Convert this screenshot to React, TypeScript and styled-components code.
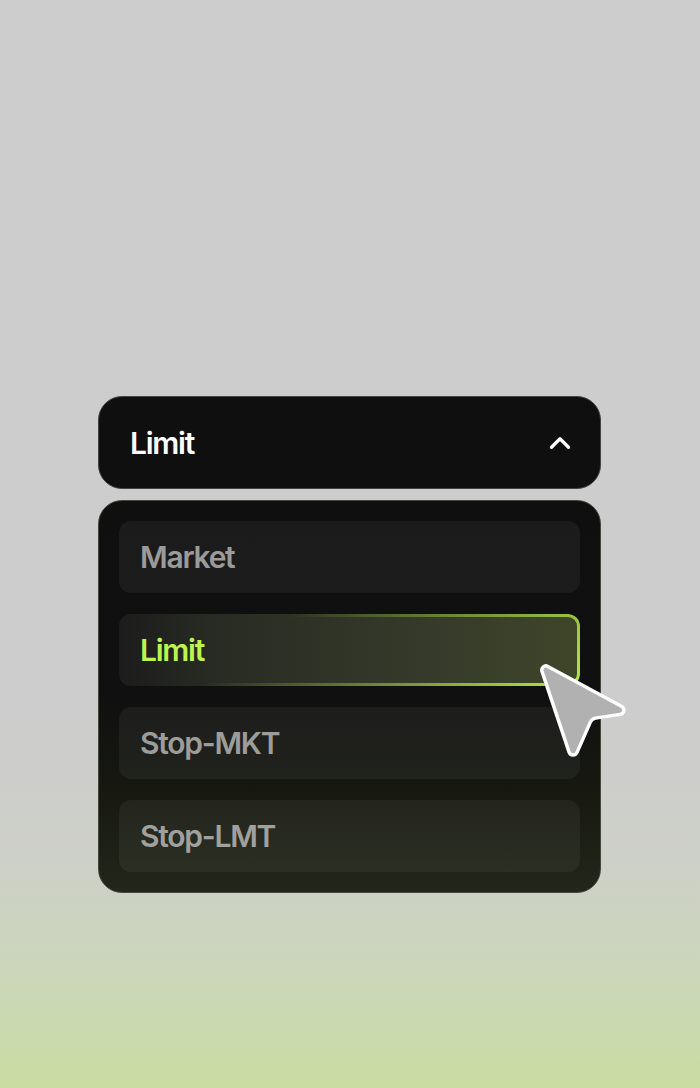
import styled, { createGlobalStyle } from "styled-components";
import { LuChevronUp } from "react-icons/lu";

const GlobalStyle = createGlobalStyle`
  html, body {
    margin: 0;
    padding: 0;
  }
  body {
    font-family: "Inter", "Liberation Sans", sans-serif;
  }
`;

const options = ["Market", "Limit", "Stop-MKT", "Stop-LMT"];
const selected = "Limit";

export default function App() {
  return (
    <>
      <GlobalStyle />
      <Page>
        <Dropdown>
          <Trigger>
            <TriggerLabel>Limit</TriggerLabel>
            <LuChevronUp size={34} strokeWidth={2.3} />
          </Trigger>
          <Panel>
            {options.map((option) => (
              <Option key={option} $active={option === selected}>
                {option}
                {option === selected && (
                  <Cursor viewBox="0 0 90 96" width="91" height="97">
                    <path
                      d="M5 8.5C3.7 4.8 7.3 1.6 10.7 3.4L83.5 42.7C87.3 44.7 86.4 50.2 82.2 50.9L58 54.6C55.6 55 53.9 56.2 52.8 58.4L39.6 88.4C38 92 33 91.9 31.7 88.2Z"
                      fill="#b1b1b1"
                      stroke="#fff"
                      strokeWidth="3.4"
                      strokeLinejoin="round"
                    />
                  </Cursor>
                )}
              </Option>
            ))}
          </Panel>
        </Dropdown>
      </Page>
    </>
  );
}

const Page = styled.div`
  box-sizing: border-box;
  width: 700px;
  height: 1088px;
  padding: 396px 99px 0 98px;
  overflow: hidden;
  background: linear-gradient(180deg, #cdcdcd 0%, #cdcdcd 66%, #cdd0c8 79%, #cbd6b9 90%, #cadca2 100%);
`;

const Dropdown = styled.div`
  display: flex;
  flex-direction: column;
  gap: 11px;
`;

const Trigger = styled.div`
  box-sizing: border-box;
  height: 93px;
  padding: 0 23px 0 31px;
  display: flex;
  align-items: center;
  justify-content: space-between;
  border-radius: 24px;
  border: 1.5px solid #444;
  background: #0f0f0f;
  color: #fff;
`;

const TriggerLabel = styled.span`
  font-size: 30px;
  font-weight: 600;
  letter-spacing: -0.042em;
`;

const Panel = styled.div`
  box-sizing: border-box;
  height: 393px;
  padding: 20px;
  display: flex;
  flex-direction: column;
  gap: 21px;
  border-radius: 24px;
  border: 1.5px solid #44473c;
  background: linear-gradient(180deg, #0f0f0f 0%, #101010 50%, #161810 72%, #23261a 100%);
`;

const Option = styled.div<{ $active?: boolean }>`
  position: relative;
  box-sizing: border-box;
  height: 72px;
  padding: 0 21px;
  display: flex;
  align-items: center;
  border-radius: 12px;
  font-size: 30px;
  font-weight: 600;
  letter-spacing: -0.042em;
  color: ${(p) => (p.$active ? "#bdf54e" : "rgba(255, 255, 255, 0.56)")};
  background: ${(p) =>
    p.$active
      ? "linear-gradient(90deg, #1c1c1c 0%, #282b23 20%, #373b2a 70%, #3e4629 100%)"
      : "rgba(255, 255, 255, 0.05)"};

  ${(p) =>
    p.$active &&
    `
    &::before {
      content: "";
      position: absolute;
      inset: 0;
      padding: 3px;
      border-radius: 12px;
      background: linear-gradient(141deg, rgba(182, 240, 68, 0) 31%, #b4ea45 100%);
      -webkit-mask: linear-gradient(#000 0 0) content-box, linear-gradient(#000 0 0);
      -webkit-mask-composite: xor;
      mask-composite: exclude;
    }
  `}
`;

const Cursor = styled.svg`
  position: absolute;
  left: 418px;
  top: 49px;
  z-index: 2;
`;
